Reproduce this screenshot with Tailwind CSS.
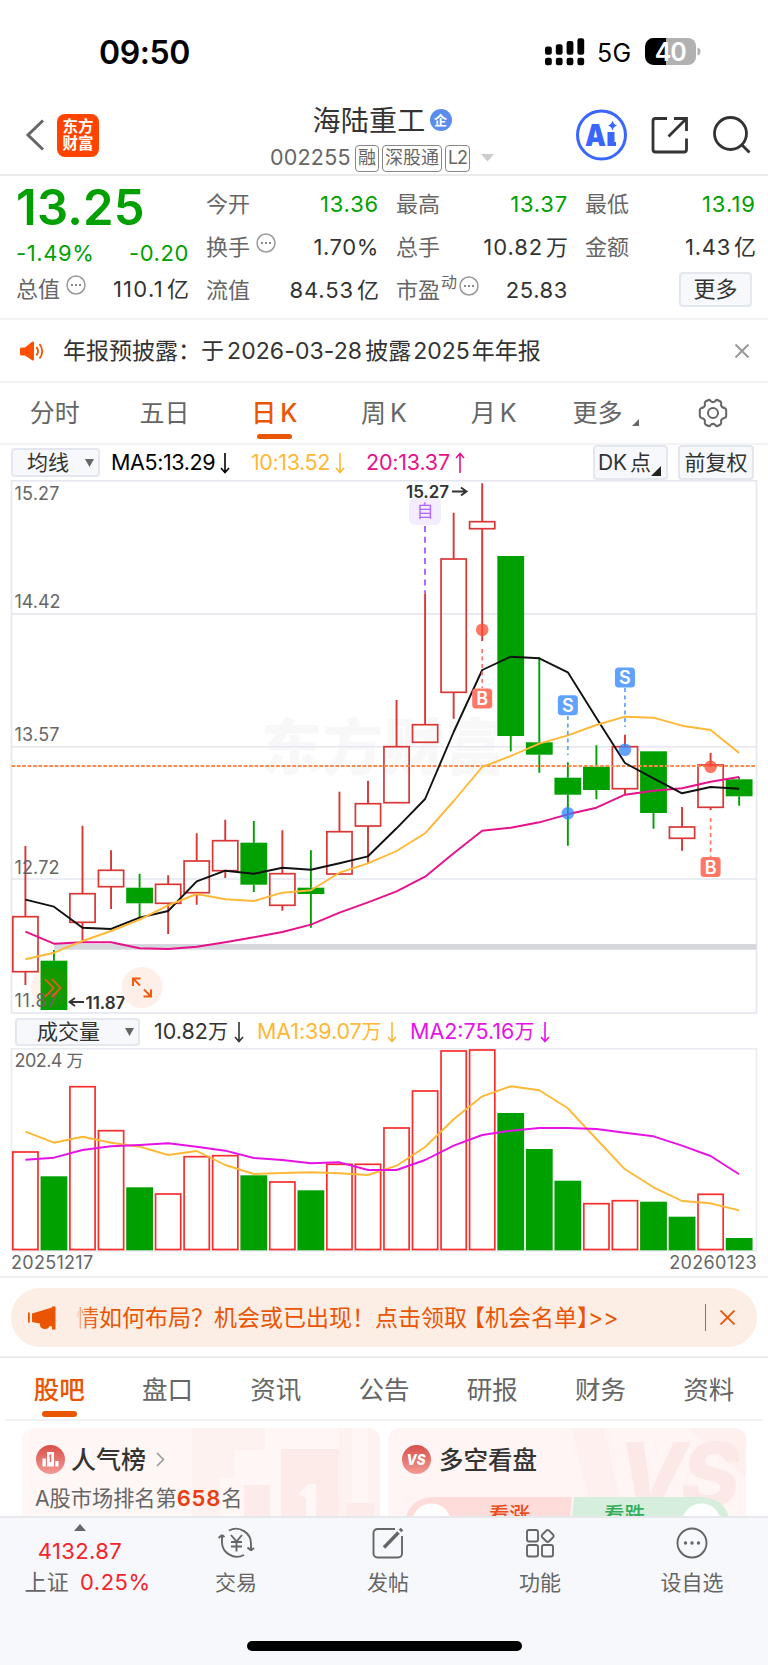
<!DOCTYPE html>
<html lang="zh-CN">
<head>
    <meta charset="UTF-8">
    <meta name="viewport" content="width=device-width, initial-scale=1.0">
    <title>海陆重工 002255</title>
    <script src="https://cdn.jsdelivr.net/npm/@tailwindcss/browser@4"></script>
</head>
<body class="bg-white font-['Inter','Noto_Sans_CJK_SC',sans-serif] text-[#333] leading-none">
<div class="w-[768px] h-[1665px] overflow-hidden flex flex-col whitespace-nowrap">

    <!-- Status bar -->
    <div class="h-[96px] shrink-0 flex items-start justify-between pl-[99px] pr-[67px] pt-[36px] text-black">
        <span class="pt-[1px] text-[32px] leading-[32px] font-semibold tracking-[-0.4px]">09:50</span>
        <div class="flex items-center">
            <svg class="w-[40px] h-[32px]" viewBox="0 0 40 32" fill="currentColor">
                <rect x="0" y="10.5" width="6.8" height="8.3" rx="2.2"/><rect x="10.8" y="8.3" width="6.8" height="10.5" rx="2.2"/>
                <rect x="21.6" y="5" width="6.8" height="13.8" rx="2.2"/><rect x="32.4" y="2.3" width="6.8" height="16.5" rx="2.2"/>
                <rect x="0" y="21.8" width="6.8" height="7.4" rx="2.2"/><rect x="10.8" y="21.8" width="6.8" height="7.4" rx="2.2"/>
                <rect x="21.6" y="21.8" width="6.8" height="7.4" rx="2.2"/><rect x="32.4" y="21.8" width="6.8" height="7.4" rx="2.2"/>
            </svg>
            <span class="ml-[12px] pt-[3px] w-[48px] text-[25px] tracking-[0.4px]">5G</span>
            <svg class="w-[56px] h-[32px]" viewBox="0 0 56 32">
                <path d="M8 2H43a8 8 0 0 1 8 8V21a8 8 0 0 1-8 8H8z" fill="#b1b1b1"/>
                <path d="M21 2H8.500a8.500 8.500 0 0 0-8.500 8.500V20.500a8.500 8.500 0 0 0 8.500 8.500H21z" fill="#000"/>
                <path d="M52.500 11.500c2 .6 3 2 3 4s-1 3.400-3 4z" fill="#b1b1b1"/>
                <text x="25.700" y="24.600" text-anchor="middle" font-size="25" font-weight="600" fill="#fff" textLength="32">40</text>
            </svg>
        </div>
    </div>

    <!-- Title bar -->
    <div class="h-[80px] shrink-0 border-b-2 border-[#ebebee] flex items-center justify-between pl-[25px] pr-[17px]">
        <div class="w-[232px] flex items-center">
            <svg class="w-[20px] h-[32px]" viewBox="0 0 20 32" fill="none" stroke="#666" stroke-width="3"><path d="M18 1.500 3 16 18 30.500"/></svg>
            <div class="ml-[12px] w-[42px] h-[43px] rounded-[8px] bg-[#ff4400] text-white text-[15.500px] leading-[17.500px] font-bold text-center pt-[4px]">东方<br>财富</div>
        </div>
        <div class="flex flex-col items-center pt-[10px] -ml-[13px]">
            <div class="flex items-center h-[36px] text-[28px] tracking-[0.3px] text-[#333]">
                <span>海陆重工</span>
                <span class="ml-[4px] mb-[1px] w-[22px] h-[22px] rounded-full bg-[#5b8def] text-white text-[13px] font-bold flex items-center justify-center">企</span>
            </div>
            <div class="flex items-center h-[39px] text-[#666]">
                <span class="text-[21.500px] tracking-[0.2px] w-[85px]">002255</span>
                <span class="h-[27px] px-[2px] rounded-[4px] border-[1.500px] border-[#888] text-[18px] flex items-center">融</span>
                <span class="ml-[3px] h-[27px] px-[2px] rounded-[4px] border-[1.500px] border-[#888] text-[18px] flex items-center">深股通</span>
                <span class="ml-[3px] w-[25px] h-[27px] rounded-[4px] border-[1.500px] border-[#888] text-[18px] tracking-[-1px] flex items-center justify-center">L2</span>
                <svg class="ml-[11px] w-[13px] h-[8px]" viewBox="0 0 13 8"><path d="M0 0H13L6.500 7.500z" fill="#ccc"/></svg>
            </div>
        </div>
        <svg class="w-[175px] h-[54px] ml-[56px]" viewBox="576 108 175 54" fill="none">
            <circle cx="601.500" cy="135" r="24" stroke="#3a66ff" stroke-width="3"/>
            <text x="585" y="146" font-size="30" font-weight="900" fill="#3a66ff" textLength="21" lengthAdjust="spacingAndGlyphs">A</text>
            <path d="M607.500 132h7v10h1.500v4h-8.500z" fill="#3a66ff"/>
            <path d="M612.500 120.500q1 4 4.500 5-3.500 1-4.500 5-1-4-4.500-5 3.500-1 4.500-5z" fill="#3a66ff"/>
            <g stroke="#333" stroke-width="2.800">
                <path d="M667 118.500H655.500a2.500 2.500 0 0 0-2.500 2.500V149.500a2.500 2.500 0 0 0 2.500 2.500H684a2.500 2.500 0 0 0 2.500-2.500V138.500M674 118.500H686.500V131M686 119 668.500 136.500"/>
                <circle cx="730.500" cy="133.500" r="16"/><path d="M741.500 144.500 749.500 152.500"/>
            </g>
        </svg>
    </div>

    <!-- Quote -->
    <div class="h-[144px] shrink-0 border-b-2 border-[#f4f4f6] pl-[16px] pr-[10px] grid grid-cols-[173px_173px_172px_171px] gap-x-[17px] text-[22px] text-[#333]">
        <div class="flex flex-col pt-[8px]">
            <div class="h-[46px] flex items-center text-[49px] font-semibold tracking-[0.2px] text-[#00a000]">13.25</div>
            <div class="h-[42px] mt-[2px] flex items-center justify-between tracking-[0.6px] text-[#00a000]"><span>-1.49%</span><span>-0.20</span></div>
            <div class="h-[29px] flex items-center justify-between">
                <span class="flex text-[#666]">总值<svg class="ml-[6px] w-[20px] h-[20px] -mt-[3px]" viewBox="0 0 20 20"><circle cx="10" cy="10" r="9" fill="none" stroke="#999" stroke-width="1.500"/><path d="M5 9h2v2H5zM9 9h2v2H9zM13 9h2v2h-2z" fill="#888"/></svg></span>
                <span class="tracking-[1.300px]">110.1<span class="ml-[3px] tracking-normal">亿</span></span>
            </div>
        </div>
        <div class="flex flex-col pt-[7px]">
            <div class="h-[42px] flex items-center justify-between"><span class="text-[#666]">今开</span><span class="tracking-[0.8px] text-[#00a000]">13.36</span></div>
            <div class="h-[43px] flex items-center justify-between">
                <span class="flex text-[#666]">换手<svg class="ml-[6px] w-[20px] h-[20px] -mt-[3px]" viewBox="0 0 20 20"><circle cx="10" cy="10" r="9" fill="none" stroke="#999" stroke-width="1.500"/><path d="M5 9h2v2H5zM9 9h2v2H9zM13 9h2v2h-2z" fill="#888"/></svg></span>
                <span class="tracking-[0.6px]">1.70%</span>
            </div>
            <div class="h-[43px] flex items-center justify-between"><span class="text-[#666]">流值</span><span class="tracking-[0.900px]">84.53<span class="ml-[3px] tracking-normal">亿</span></span></div>
        </div>
        <div class="flex flex-col pt-[7px]">
            <div class="h-[42px] flex items-center justify-between"><span class="text-[#666]">最高</span><span class="tracking-[0.8px] text-[#00a000]">13.37</span></div>
            <div class="h-[43px] flex items-center justify-between"><span class="text-[#666]">总手</span><span class="tracking-[0.900px]">10.82<span class="ml-[3px] tracking-normal">万</span></span></div>
            <div class="h-[43px] flex items-center justify-between">
                <span class="flex text-[#666]">市盈<span class="ml-[1px] text-[16px] -mt-[5px]">动</span><svg class="ml-[2px] w-[20px] h-[20px] -mt-[3px]" viewBox="0 0 20 20"><circle cx="10" cy="10" r="9" fill="none" stroke="#999" stroke-width="1.500"/><path d="M5 9h2v2H5zM9 9h2v2H9zM13 9h2v2h-2z" fill="#888"/></svg></span>
                <span class="tracking-[0.6px]">25.83</span>
            </div>
        </div>
        <div class="flex flex-col pt-[7px]">
            <div class="h-[42px] flex items-center justify-between"><span class="text-[#666]">最低</span><span class="tracking-[1px] text-[#00a000]">13.19</span></div>
            <div class="h-[43px] flex items-center justify-between"><span class="text-[#666]">金额</span><span class="tracking-[0.7px]">1.43<span class="ml-[3px] tracking-normal">亿</span></span></div>
            <div class="h-[39px] flex items-end justify-end pr-[4px]"><span class="w-[73px] h-[35px] pb-[2px] rounded-[4px] border-2 border-[#e4e7ed] bg-[#f7f8fb] flex items-center justify-center">更多</span></div>
        </div>
    </div>

    <!-- Notice -->
    <div class="h-[63px] shrink-0 border-b-2 border-[#f4f4f6] flex items-center pl-[20px] pr-[19px]">
        <svg class="w-[24px] h-[20px]" viewBox="0 0 24 20" fill="none">
            <path d="M1.500 6.500H5L12 .8q2-.8 2 1V18.200q0 1.800-2 1L5 14.500H1.500Q0 14.500 0 13V8q0-1.500 1.500-1.500z" fill="#fe5000"/>
            <path d="M16.500 6q3 4.300 0 8.500M19.500 3q5.500 7.300 0 14.500" stroke="#fe5000" stroke-width="1.800"/>
        </svg>
        <span class="ml-[19px] pt-[1px] text-[23px]">年报预披露：于<span class="mx-[3px] tracking-[0.1px]">2026-03-28</span>披露<span class="mx-[2px]">2025</span>年年报</span>
        <svg class="ml-auto w-[14px] h-[14px]" viewBox="0 0 14 14" stroke="#999" stroke-width="2"><path d="M.5.5 13.500 13.500M13.500.5.5 13.500"/></svg>
    </div>

    <!-- Period tabs -->
    <div class="h-[62px] shrink-0 border-b-2 border-[#f4f4f6] grid grid-cols-7 text-[25px] text-[#666] text-center">
        <div class="pt-[18px]">分时</div>
        <div class="pt-[18px]">五日</div>
        <div class="pt-[18px] text-[#ea5504] font-medium flex flex-col items-center"><span>日<span class="ml-[4px]">K</span></span><span class="mt-[8px] w-[35px] h-[5px] rounded-full bg-[#ea5504]"></span></div>
        <div class="pt-[18px]">周<span class="ml-[4px]">K</span></div>
        <div class="pt-[18px]">月<span class="ml-[4px]">K</span></div>
        <div class="pt-[18px] pl-[5px] flex justify-center">更多<svg class="ml-[10px] mt-[18px] w-[7px] h-[7px]" viewBox="0 0 7 7"><path d="M7 0V7H0z" fill="#666"/></svg></div>
        <div class="pt-[15px] flex justify-center">
            <svg class="w-[30px] h-[30px]" viewBox="0 0 30 30" fill="none" stroke="#666" stroke-width="2" stroke-linejoin="round">
                <path d="M10.500 2Q12 1.500 12.800 3.200Q15 5 17.200 3.200Q18 1.500 19.500 2L22.500 3.500Q23.800 5 23 7Q23.500 9.600 26.500 10Q28 10.500 28.200 12V18Q28 19.500 26.500 20Q23.500 20.400 23 23Q23.800 25 22.500 26.500L19.500 28Q18 28.500 17.200 26.800Q15 25 12.800 26.800Q12 28.500 10.500 28L7.500 26.500Q6.200 25 7 23Q6.500 20.400 3.500 20Q2 19.500 1.800 18V12Q2 10.500 3.500 10Q6.500 9.600 7 7Q6.200 5 7.500 3.500z"/><circle cx="15" cy="15" r="5"/>
            </svg>
        </div>
    </div>

    <!-- Moving averages -->
    <div class="h-[35px] shrink-0 flex items-center pl-[11px] pr-[14px] text-[21.500px]">
        <span class="w-[89px] h-[29px] pl-[14px] pr-[4px] rounded-[4px] border-2 border-[#e4e7ed] bg-[#f7f8fb] flex items-center justify-between text-[21px]">均线<svg class="w-[9px] h-[8px]" viewBox="0 0 9 8"><path d="M0 0H9L4.500 8z" fill="#666"/></svg></span>
        <span class="ml-[11px] w-[140px] pt-[1px] flex items-center text-black tracking-[-0.4px]">MA5:13.29<svg class="ml-[5px] w-[10px] h-[22px]" viewBox="0 0 10 22" fill="none" stroke="currentColor" stroke-width="1.600"><path d="M5 1V20M1 16 5 20.500 9 16"/></svg></span>
        <span class="w-[115px] pt-[1px] flex items-center text-[#ffb836] tracking-[-0.4px]">10:13.52<svg class="ml-[5px] w-[10px] h-[22px]" viewBox="0 0 10 22" fill="none" stroke="currentColor" stroke-width="1.600"><path d="M5 1V20M1 16 5 20.500 9 16"/></svg></span>
        <span class="pt-[1px] flex items-center text-[#e5128b] tracking-[-0.2px]">20:13.37<svg class="ml-[5px] w-[10px] h-[22px]" viewBox="0 0 10 22" fill="none" stroke="currentColor" stroke-width="1.600"><path d="M5 21V2M1 6 5 1.500 9 6"/></svg></span>
        <span class="ml-auto w-[75px] h-[35px] pl-[3px] rounded-[4px] border-2 border-[#e4e7ed] bg-[#f7f8fb] flex items-center text-[21px] tracking-[-0.2px]">DK<span class="ml-[3px]">点</span><svg class="self-end mb-[2px] w-[10px] h-[10px]" viewBox="0 0 10 10"><path d="M10 0V10H0z" fill="#222"/></svg></span>
        <span class="ml-[10px] w-[76px] h-[35px] rounded-[4px] border-2 border-[#e4e7ed] bg-[#f7f8fb] flex items-center justify-center text-[21px]">前复权</span>
    </div>

    <!-- Candles -->
    <svg class="w-[768px] h-[534px] shrink-0" viewBox="0 480 768 534" fill="none">
        <text x="261" y="770" font-size="61" font-weight="900" fill="#f8f8f9" textLength="245">东方财富</text>
        <g stroke="#e4e7ef" stroke-width="1.600">
            <rect x="11.500" y="480.800" width="745" height="532.200"/>
            <path d="M11.500 613.900H756.500M11.500 746.800H756.500M11.500 879H756.500"/>
        </g>
        <rect x="54" y="944" width="702.500" height="5.700" fill="#d5d7dc"/>
        <g id="candles"></g>
        <path d="M11.500 766H756.500" stroke="#fb8a4b" stroke-width="1.900" stroke-dasharray="3.700 1.700"/>
        <g id="maLines" stroke-width="1.900" stroke-linejoin="round"></g>
        <g>
            <rect x="409" y="498" width="32" height="27" rx="6" fill="#f4ecff"/>
            <text x="425" y="517" font-size="17" text-anchor="middle" fill="#b266ff">自</text>
            <path d="M425 526V593" stroke="#b266ff" stroke-width="2" stroke-dasharray="6 4.700"/>
        </g>
        <g font-size="18" fill="#666">
            <text x="14.500" y="500" textLength="45">15.27</text>
            <text x="14.500" y="608" textLength="46">14.42</text>
            <text x="14.500" y="741" textLength="45">13.57</text>
            <text x="14.500" y="874" textLength="45">12.72</text>
            <text x="14.500" y="1006.700" textLength="43">11.87</text>
        </g>
        <g font-size="17" font-weight="600" fill="#333">
            <text x="406" y="497.800" textLength="43">15.27</text>
            <text x="85.500" y="1008.500" textLength="40">11.87</text>
        </g>
        <path d="M452 491.500H466M461 487.500 466.500 491.500 461 495.500M84 1002H70M75 998 69.500 1002 75 1006" stroke="#333" stroke-width="1.900"/>
        <g id="marks"></g>
        <g stroke="#f25a0f" stroke-width="1.800">
            <circle cx="51.300" cy="987.500" r="20.500" fill="#fe5000" fill-opacity=".08" stroke="none"/>
            <circle cx="142" cy="987.500" r="20.500" fill="#feefe8" stroke="none"/>
            <path d="M45 979 53.500 988 45 997M52 979 60.500 988 52 997"/>
            <path d="M133 986V978.500H140.500M133 978.500 140 985.500M151 989.500V996.500H143.500M151 996.500 144 989.500" stroke-width="2"/>
        </g>
    </svg>

    <!-- Volume header -->
    <div class="h-[34px] shrink-0 flex items-center pl-[15px] pt-[1px] text-[21.500px]">
        <span class="w-[125px] h-[28px] pl-[20px] pr-[4px] rounded-[4px] border-2 border-[#e4e7ed] bg-[#f7f8fb] flex items-center justify-between text-[21px]">成交量<svg class="w-[9px] h-[8px]" viewBox="0 0 9 8"><path d="M0 0H9L4.500 8z" fill="#666"/></svg></span>
        <span class="ml-[14px] w-[103px] pt-[1px] flex items-center">10.82<span class="text-[20px]">万</span><svg class="ml-[6px] w-[10px] h-[22px]" viewBox="0 0 10 22" fill="none" stroke="currentColor" stroke-width="1.600"><path d="M5 1V20M1 16 5 20.500 9 16"/></svg></span>
        <span class="w-[153px] pt-[1px] flex items-center text-[#ffb836] tracking-[-0.1px]">MA1:39.07<span class="text-[20px]">万</span><svg class="ml-[5px] w-[10px] h-[22px]" viewBox="0 0 10 22" fill="none" stroke="currentColor" stroke-width="1.600"><path d="M5 1V20M1 16 5 20.500 9 16"/></svg></span>
        <span class="pt-[1px] flex items-center text-[#e612e6]">MA2:75.16<span class="text-[20px]">万</span><svg class="ml-[6px] w-[10px] h-[22px]" viewBox="0 0 10 22" fill="none" stroke="currentColor" stroke-width="1.600"><path d="M5 1V20M1 16 5 20.500 9 16"/></svg></span>
    </div>

    <!-- Volume bars -->
    <svg class="w-[768px] h-[204px] shrink-0" viewBox="0 1048 768 204" fill="none">
        <rect x="11.500" y="1048.800" width="745" height="202" stroke="#e9ebf1" stroke-width="1.600"/>
        <g id="volumes"></g>
        <g id="volLines" stroke-width="1.900" stroke-linejoin="round"></g>
        <text x="14.500" y="1066.500" font-size="18" fill="#666" textLength="48">202.4</text>
        <text x="66.500" y="1066.500" font-size="17" fill="#666">万</text>
    </svg>
    <div class="h-[26px] shrink-0 border-b-2 border-[#f0f0f3] flex justify-between pl-[11px] pr-[11px] pt-[1px] text-[18px] leading-[20px] tracking-[0.3px] text-[#666]"><span>20251217</span><span>20260123</span></div>

    <!-- Promo banner -->
    <div class="h-[80px] shrink-0 border-b-2 border-[#ececef] pl-[11px] pr-[11px] pt-[10px]">
        <div class="h-[59px] rounded-[29px] bg-[#fdeee5] flex items-center pl-[17px] pr-[22px] text-[#ea5504]">
            <svg class="w-[28px] h-[24px]" viewBox="0 0 28 24" fill="currentColor"><path d="M0 6.500h1.800v10H0zM4 7.500 24 1.500V.5H27.500V23.500H24V20.500L21.500 20Q20.500 23.500 16 23Q11.500 22 12 17.500L4 16z"/></svg>
            <span class="ml-[20px] pt-[1px] text-[23px]"><span class="bg-gradient-to-r from-[#ea5504]/5 via-[#ea5504]/80 via-40% to-[#ea5504] bg-clip-text text-transparent">情</span>如何布局？机会或已出现！点击领取<span class="-ml-[5px]">【</span>机会名单<span class="-mr-[12px]">】</span>&gt;&gt;</span>
            <span class="ml-auto w-[1.500px] h-[27px] bg-[#ea5504]"></span>
            <svg class="ml-[14px] w-[15px] h-[15px]" viewBox="0 0 15 15" stroke="currentColor" stroke-width="1.800"><path d="M.5.5 14.500 14.500M14.500.5.5 14.500"/></svg>
        </div>
    </div>

    <!-- Section tabs -->
    <div class="h-[63px] shrink-0 mx-[5px] border-b-2 border-[#f0f1f5] grid grid-cols-7 text-[25.500px] text-[#666] text-center">
        <div class="pt-[19px] text-[#ea5504] font-medium flex flex-col items-center"><span>股吧</span><span class="mt-[8px] w-[35px] h-[6px] rounded-full bg-[#ea5504]"></span></div>
        <div class="pt-[19px]">盘口</div>
        <div class="pt-[19px]">资讯</div>
        <div class="pt-[19px]">公告</div>
        <div class="pt-[19px]">研报</div>
        <div class="pt-[19px]">财务</div>
        <div class="pt-[19px]">资料</div>
    </div>

    <!-- Cards -->
    <div class="h-[95px] shrink-0 overflow-hidden pt-[7px] px-[22px] grid grid-cols-2 gap-x-[8px]">
        <div class="relative h-[120px] rounded-[12px] bg-[#fef7f6] overflow-hidden">
            <svg class="absolute inset-0 w-full h-full" viewBox="0 0 358 120">
                <path d="M170 0H243V22H213V50H198V120H170zM316 0H330V120H316zM346 0H358V120H346z" fill="#fef2f0"/>
                <path d="M259 21H317V120H259zM222 57H248V120H222zM325 75H352V120H325z" fill="#fdebe9"/>
                <path d="M276 66 286 56H294V120H284V70z" fill="#fef7f6"/>
            </svg>
            <div class="relative flex items-center pl-[14px] pt-[17px] text-[25px] font-medium">
                <svg class="w-[29px] h-[29px]" viewBox="0 0 29 29"><defs><linearGradient id="red" x1="0" y1="0" x2="0" y2="1"><stop offset="0" stop-color="#d94f4b"/><stop offset="1" stop-color="#f29a94"/></linearGradient></defs><circle cx="14.500" cy="14.500" r="14.500" fill="url(#red)"/><path d="M11 7H18V21.500H11zM6.500 13.500H9.800V21.500H6.500zM19.300 16H22.500V21.500H19.300z" fill="#fff"/><path d="M13.300 11.500 14.500 10.300V17" fill="none" stroke="#df6661" stroke-width="1.500"/></svg>
                <span class="ml-[6px] pt-[1px]">人气榜</span>
                <svg class="ml-[10px] w-[9px] h-[15px]" viewBox="0 0 9 15" fill="none" stroke="#999" stroke-width="1.600"><path d="M1 1 7.500 7.500 1 14"/></svg>
            </div>
            <div class="relative pl-[13px] mt-[13px] text-[21.200px] text-[#666]">A股市场排名第<span class="font-semibold text-[22px] text-[#ea3d12] tracking-[0.8px]">658</span>名</div>
        </div>
        <div class="relative h-[120px] rounded-[12px] bg-[#fef5f4] overflow-hidden">
            <svg class="absolute inset-0 w-full h-full" viewBox="0 0 358 120">
                <path d="M184 0H216L232 70H200zM300 0H358V50z" fill="#fef0ee"/>
                <text x="229" y="79" font-size="90" font-weight="800" font-style="italic" fill="#fce9e7" textLength="123">VS</text>
                <path d="M17 120V100Q17 69 48 69H184L179 120z" fill="#fddcd9"/>
                <path d="M186 69H310Q342 69 342 100V120H181z" fill="#d5efdc"/>
                <circle cx="43.500" cy="95" r="19.500" fill="#fff"/><circle cx="313.500" cy="95" r="19.500" fill="#fff"/>
                <text x="101" y="94" font-size="20.500" font-weight="500" fill="#ea4c1c">看涨</text>
                <text x="216" y="94" font-size="20.500" font-weight="500" fill="#34ae5c">看跌</text>
            </svg>
            <div class="relative flex items-center pl-[14px] pt-[17px] text-[24.500px] font-medium">
                <svg class="w-[29px] h-[29px]" viewBox="0 0 29 29"><circle cx="14.500" cy="14.500" r="14.500" fill="url(#red)"/><text x="14" y="20" text-anchor="middle" font-size="15" font-weight="800" font-style="italic" fill="#fff" textLength="19" lengthAdjust="spacingAndGlyphs">VS</text></svg>
                <span class="ml-[8px] pt-[1px]">多空看盘</span>
            </div>
        </div>
    </div>

    <!-- Bottom bar -->
    <div class="grow border-t-2 border-[#e6e8ec] bg-[#f7f8fb] flex flex-col items-center text-[#666]">
        <div class="w-full h-[123px] grid grid-cols-[160px_152px_152px_152px_152px] text-[21px]">
            <div class="flex flex-col items-center pt-[6px] text-[22px] text-[#f5232a]">
                <svg class="w-[12px] h-[7px]" viewBox="0 0 12 7"><path d="M6 0 12 7H0z" fill="#666"/></svg>
                <span class="mt-[9px] tracking-[0.4px]">4132.87</span>
                <span class="mt-[9px] pl-[15px] tracking-[0.3px]"><span class="text-[#666]">上证</span><span class="ml-[11px] tracking-[0.5px]">0.25%</span></span>
            </div>
            <div class="flex flex-col items-center pt-[8px]">
                <svg class="w-[38px] h-[34px]" viewBox="0 0 38 34" fill="none" stroke="#666" stroke-width="1.900">
                    <path d="M12 4.500A15 15 0 0 1 34 18.500V24.500M34 24.500 30.500 21.500M34 24.500 37 22M27 29A15 15 0 0 1 5 15V9M5 9 1.500 12M5 9 7.500 11"/>
                    <path d="M14 9 19.500 15.500 25 9M19.500 15.500V25.500M14 16H25M14 20.500H25"/>
                </svg>
                <span class="mt-[12px]">交易</span>
            </div>
            <div class="flex flex-col items-center pt-[8px]">
                <svg class="w-[34px] h-[34px]" viewBox="0 0 34 34" fill="none" stroke="#666" stroke-width="1.900">
                    <path d="M24 3H6.500A4 4 0 0 0 2.500 7V27.500A4 4 0 0 0 6.500 31.500H27A4 4 0 0 0 31 27.500V10"/>
                    <path d="M13 21.500 27.500 6.500" stroke-width="3.400"/><path d="M29 5 31 3" stroke-width="3.600"/>
                </svg>
                <span class="mt-[12px]">发帖</span>
            </div>
            <div class="flex flex-col items-center pt-[8px]">
                <svg class="w-[32px] h-[34px]" viewBox="0 0 32 34" fill="none" stroke="#666" stroke-width="1.900">
                    <rect x="3" y="4" width="11" height="11.500" rx="2"/><rect x="3" y="19" width="11" height="11.500" rx="2"/><rect x="18" y="19" width="11" height="11.500" rx="2"/>
                    <path d="M22.300 4.700Q23.700 3.200 25.100 4.700L29.200 8.700Q30.300 10 29.200 11.300L25.100 15.300Q23.700 16.600 22.300 15.300L18.200 11.300Q17.100 10 18.200 8.700z"/>
                </svg>
                <span class="mt-[12px]">功能</span>
            </div>
            <div class="flex flex-col items-center pt-[8px]">
                <svg class="w-[34px] h-[34px]" viewBox="0 0 34 34"><circle cx="17" cy="17" r="14.500" fill="none" stroke="#666" stroke-width="1.900"/><g fill="#666"><circle cx="10.500" cy="17" r="1.700"/><circle cx="17" cy="17" r="1.700"/><circle cx="23.500" cy="17" r="1.700"/></g></svg>
                <span class="mt-[12px]">设自选</span>
            </div>
        </div>
        <div class="w-[275px] h-[10px] rounded-full bg-black"></div>
    </div>
</div>

<script>
    var STEP = 28.55, FIRST = 25.4, UP = '#d93636', DOWN = '#00a000';

    // [direction, high, body top, body bottom, low]
    var candles = [
        ['r', 846, 916.7, 971.7, 985], ['g', 950, 960.7, 1010, 1010], ['r', 825.7, 893.7, 922.3, 942.7],
        ['r', 850.3, 870.3, 886.7, 909], ['g', 873.7, 887.7, 903.3, 917.7], ['r', 875.3, 884.3, 903.3, 934],
        ['r', 833.3, 861, 892.7, 904.7], ['r', 819.7, 840.7, 870.7, 878], ['g', 821, 842.7, 884.7, 892],
        ['r', 830.3, 873.7, 905.3, 910.7], ['g', 850.3, 887.7, 894, 927.7], ['r', 791.7, 831.7, 874, 874],
        ['r', 780.7, 803.7, 826, 862.7], ['r', 700, 746.7, 802.7, 802.7], ['r', 593.3, 724.7, 742.3, 742.3],
        ['r', 512.7, 559, 692.3, 718.7], ['r', 483.3, 521.7, 528.7, 641], ['g', 556, 556, 736, 751.3],
        ['g', 657.3, 742.3, 754.7, 772.7], ['g', 762.3, 777.7, 794.7, 845.7], ['g', 745.3, 766.7, 790, 799.3],
        ['r', 734.7, 746.7, 788.7, 795.3], ['g', 751.3, 751.3, 813, 828.7], ['r', 807, 827, 838.3, 850.7],
        ['r', 753, 765, 807.3, 810], ['g', 777.3, 779.3, 796.3, 805.7]
    ];
    var ma = [
        ['#e5128b', [931.7, 943.7, 942.3, 942.3, 948.3, 949, 946.7, 942.3, 937.3, 932, 924.7, 912.7, 902.3, 891.3, 876.7, 853.3, 830.7, 827.7, 822.3, 814.3, 807.7, 794.7, 790.7, 788.3, 781.7, 777]],
        ['#111', [899.7, 906.7, 927.7, 929, 917.7, 911, 881.3, 870.7, 873.7, 867.7, 869.7, 863.3, 856.3, 828.3, 799, 732, 670, 656.7, 658.3, 672.3, 718, 763, 778.3, 793.3, 787, 788.7]],
        ['#ffb836', [959.3, 952.7, 941, 931, 919.7, 905.3, 894, 899.3, 901, 892.7, 890.3, 872.7, 863.3, 851, 833.3, 801, 767, 756, 743.7, 735.3, 725, 716.7, 717.7, 725.7, 730, 753]]
    ];
    // [direction, bar top]
    var volumes = [
        ['r', 1152], ['g', 1176.3], ['r', 1086.7], ['r', 1130.7], ['g', 1187.3], ['r', 1194], ['r', 1156.7],
        ['r', 1155.7], ['g', 1175.3], ['r', 1182], ['g', 1190.3], ['r', 1164.3], ['r', 1164.3], ['r', 1128],
        ['r', 1091], ['r', 1051], ['r', 1050], ['g', 1113], ['g', 1149], ['g', 1180.7], ['r', 1203.7],
        ['r', 1200.7], ['g', 1201.7], ['g', 1216.7], ['r', 1194.3], ['g', 1238]
    ];
    var volMa = [
        ['#ffb836', [1131.7, 1142.7, 1136.7, 1142.7, 1146.7, 1155, 1151, 1165, 1174, 1173, 1172.3, 1173.3, 1175, 1165.7, 1147, 1119.3, 1096.3, 1086.3, 1090.3, 1108.3, 1139, 1169.3, 1187.3, 1201, 1203.3, 1210.3]],
        ['#e612e6', [1159.7, 1157.7, 1150, 1146.3, 1145, 1143.3, 1146.7, 1150.7, 1158, 1160, 1163.3, 1162.3, 1170, 1170, 1160, 1145.7, 1135, 1130.7, 1128, 1128, 1129, 1132.7, 1136.3, 1145.7, 1156, 1174.3]]
    ];
    // [candle index, letter, dot y, badge y, dash start, dash end]
    var marks = [
        [16, 'B', 629.7, 698.5, 649, 688], [24, 'B', 766.7, 867, 818, 857],
        [19, 'S', 813.3, 705.3, 716, 755], [21, 'S', 749.7, 677.5, 688, 727]
    ];

    function xAt(i) { return FIRST + i * STEP; }

    function box(i, top, bottom, up, color) {
        var x = xAt(i);
        return up
            ? '<rect x="' + (x - 12.6) + '" y="' + top + '" width="25.2" height="' + (bottom - top) + '" stroke="' + color + '" stroke-width="1.7"/>'
            : '<rect x="' + (x - 13.4) + '" y="' + top + '" width="26.8" height="' + (bottom - top) + '" fill="' + color + '"/>';
    }

    function lines(series) {
        return series.map(function (s) {
            return '<polyline stroke="' + s[0] + '" points="' + s[1].map(function (y, i) { return xAt(i) + ',' + y; }).join(' ') + '"/>';
        }).join('');
    }

    document.getElementById('candles').innerHTML = candles.map(function (c, i) {
        var up = c[0] === 'r', color = up ? UP : DOWN, x = xAt(i);
        return '<path stroke="' + color + '" stroke-width="1.9" d="M' + x + ' ' + c[1] + 'V' + c[2] + 'M' + x + ' ' + c[3] + 'V' + c[4] + '"/>' + box(i, c[2], c[3], up, color);
    }).join('');
    document.getElementById('maLines').innerHTML = lines(ma);

    document.getElementById('volumes').innerHTML = volumes.map(function (v, i) {
        var up = v[0] === 'r';
        return box(i, v[1], up ? 1249.5 : 1250.3, up, up ? '#fa2d2d' : DOWN);
    }).join('');
    document.getElementById('volLines').innerHTML = lines(volMa);

    document.getElementById('marks').innerHTML = marks.map(function (m) {
        var x = xAt(m[0]), color = m[1] === 'B' ? '#ff7766' : '#5fa2ff';
        var dot = m[1] === 'B' ? '#ff4a33' : '#2f86ff';
        return '<circle cx="' + x + '" cy="' + m[2] + '" r="6.3" fill="' + dot + '" fill-opacity=".75"/>' +
            '<path d="M' + x + ' ' + m[4] + 'V' + m[5] + '" stroke="' + color + '" stroke-width="1.7" stroke-dasharray="4 3.5"/>' +
            '<rect x="' + (x - 10) + '" y="' + (m[3] - 10) + '" width="20" height="20" rx="3.5" fill="' + color + '"/>' +
            '<text x="' + x + '" y="' + (m[3] + 6.5) + '" text-anchor="middle" font-size="18" font-weight="600" fill="#fff">' + m[1] + '</text>';
    }).join('');
</script>
</body>
</html>
